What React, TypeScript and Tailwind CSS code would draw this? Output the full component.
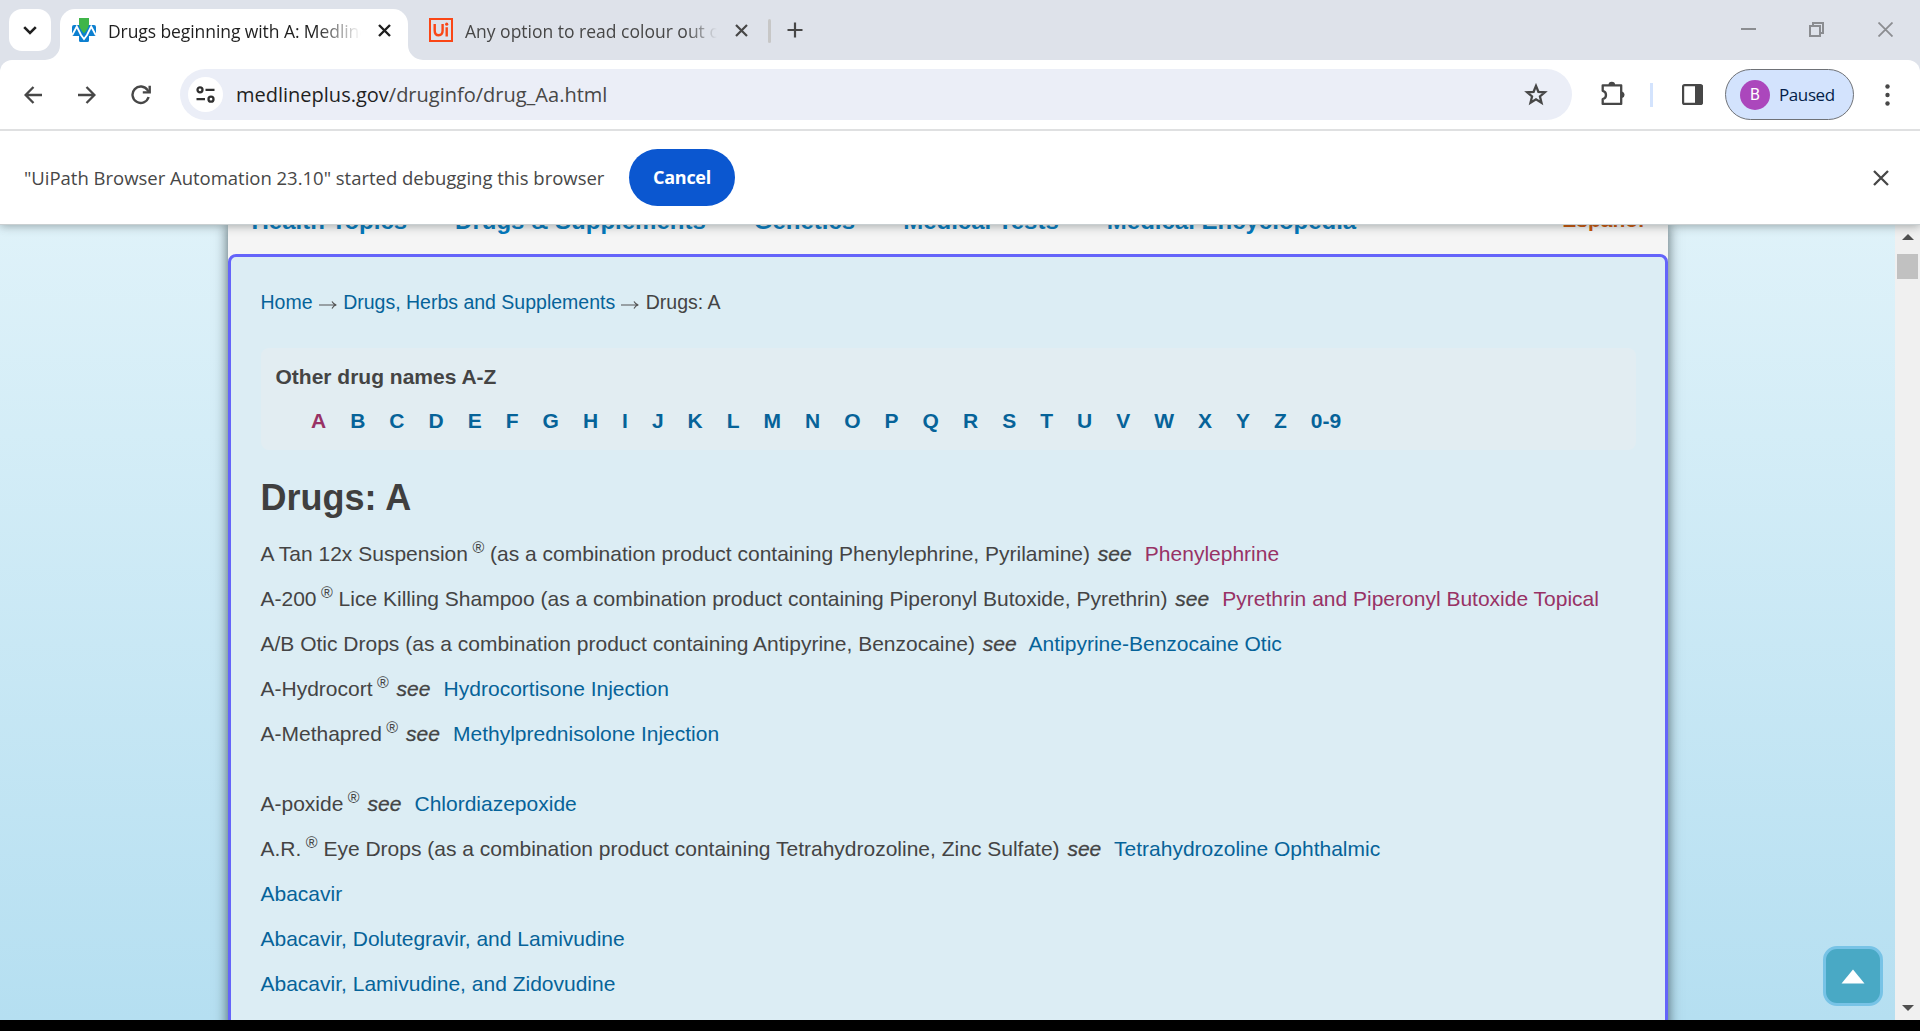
import React from "react";

const SANS = "font-['Liberation_Sans',Arial,sans-serif]";
const UI = "font-['Open_Sans','Noto_Sans',sans-serif]";

function Cross({ size, width, color }: { size: number; width: number; color: string }) {
  return (
    <svg width={size} height={size} viewBox={`0 0 ${size} ${size}`} fill="none" stroke={color} strokeWidth={width}>
      <path d={`M1 1 L${size - 1} ${size - 1} M${size - 1} 1 L1 ${size - 1}`} />
    </svg>
  );
}

function TabStrip() {
  return (
    <div className="flex h-[60px] shrink-0 items-start bg-[#dee2ea]">
      <button className="ml-[9px] mt-[9px] flex size-[42px] items-center justify-center rounded-[13px] bg-white">
        <svg width="14" height="9" viewBox="0 0 14 9" fill="none" stroke="#1f1f1f" strokeWidth="2.6" className="mt-px">
          <path d="M1.2 1.2 L7 7 L12.8 1.2" />
        </svg>
      </button>
      <div className="relative ml-[9px] mt-[9px] flex h-[51px] w-[348px] items-start rounded-t-[15px] bg-white">
        <svg className="absolute -left-[15px] bottom-0" width="15" height="15" viewBox="0 0 15 15">
          <path d="M15 0 A15 15 0 0 1 0 15 H15 Z" fill="#fff" />
        </svg>
        <svg className="absolute -right-[15px] bottom-0" width="15" height="15" viewBox="0 0 15 15">
          <path d="M0 0 A15 15 0 0 0 15 15 H0 Z" fill="#fff" />
        </svg>
        <svg className="ml-[12px] mt-[9px] shrink-0" width="24" height="24" viewBox="0 0 24 24">
          <path d="M0 18 V9 Q0 7 2 7 H22 Q24 7 24 9 V18 H17 V22.5 Q17 24 15.500 24 H8.500 Q7 24 7 22.500 V18 Z" fill="#0b7fd0" />
          <path d="M0 17.500 L4.800 8.500 L9 17 L12 21 L15 17 L19.200 8.500 L24 17.500" fill="none" stroke="#fff" strokeWidth="1.800" />
          <path d="M7 0 H17 V6 Q17 10 12 15.500 Q7 10 7 6 Z" fill="#3fb549" />
        </svg>
        <div className={`${UI} ml-[12px] mt-[9px] h-7 w-[253px] overflow-hidden whitespace-nowrap text-[17.500px] leading-[26px] tracking-[-0.080px] text-[#1f1f1f] [mask-image:linear-gradient(to_right,black_82%,transparent_100%)]`}>
          Drugs beginning with A: MedlinePlus
        </div>
        <div className="ml-[16.5px] mt-[15px]">
          <Cross size={13} width={2.4} color="#1f1f1f" />
        </div>
      </div>
      <svg className="ml-[21px] mt-[18px] shrink-0" width="24" height="24" viewBox="0 0 24 24">
        <rect x="1.000" y="1.000" width="22" height="22" fill="none" stroke="#fa4616" strokeWidth="2" />
        <path d="M5.700 6 V12.500 Q5.700 17.300 9.700 17.300 Q13.600 17.300 13.600 12.500 V6 M17.700 9.200 V18.500" fill="none" stroke="#fa4616" strokeWidth="2.400" />
        <circle cx="17.700" cy="6.200" r="1.600" fill="#fa4616" />
      </svg>
      <div className={`${UI} ml-[12px] mt-[18px] h-7 w-[252px] overflow-hidden whitespace-nowrap text-[17.500px] leading-[26px] text-[#474747] [mask-image:linear-gradient(to_right,black_88%,transparent_100%)]`}>
        Any option to read colour out of
      </div>
      <div className="ml-[18px] mt-[24px]">
        <Cross size={13} width={2.2} color="#474747" />
      </div>
      <div className="ml-[20px] mt-[19px] h-6 w-[3px] rounded bg-[#c7c7c7]" />
      <svg className="ml-[16px] mt-[22px]" width="16" height="16" viewBox="0 0 16 16" stroke="#474747" strokeWidth="2.200">
        <path d="M8 0.500 V15.500 M0.500 8 H15.500" />
      </svg>
      <div className="ml-auto mr-[27px] mt-[22px] flex items-start">
        <svg width="15" height="15" viewBox="0 0 15 15" fill="#8b8d91">
          <rect y="6" width="15" height="2" />
        </svg>
        <svg className="ml-[53px]" width="15" height="15" viewBox="0 0 15 15" fill="none" stroke="#8b8d91" strokeWidth="2">
          <rect x="1" y="4" width="10" height="10" />
          <path d="M4 4 V1 H14 V11 H11" />
        </svg>
        <svg className="ml-[54px]" width="15" height="15" viewBox="0 0 15 15" stroke="#8b8d91" strokeWidth="1.800">
          <path d="M0.500 0.500 L14.500 14.500 M14.500 0.500 L0.500 14.500" />
        </svg>
      </div>
    </div>
  );
}

function Toolbar() {
  return (
    <div className="shrink-0 bg-[#dee2ea]">
      <div className="flex h-[69px] items-center rounded-t-[12px] bg-white">
        <svg className="ml-[24px]" width="18" height="18" viewBox="0 0 18 18" fill="none" stroke="#474747" strokeWidth="2.300">
          <path d="M18 9 H2 M9.500 1 L1.600 9 L9.500 17" />
        </svg>
        <svg className="ml-[36px]" width="18" height="18" viewBox="0 0 18 18" fill="none" stroke="#474747" strokeWidth="2.300">
          <path d="M0 9 H16 M8.500 1 L16.400 9 L8.500 17" />
        </svg>
        <svg className="ml-[35px]" width="20" height="20" viewBox="0 0 20 20" fill="none" stroke="#474747" strokeWidth="2.400">
          <path d="M17.600 12 A8.200 8.200 0 1 1 16.600 5.200 L18.500 7.300" />
          <path d="M18.700 0.800 V7.400 H11.800" />
        </svg>
        <div className="ml-[29px] flex h-[51px] w-[1392px] items-center rounded-full bg-[#ebeef7]">
          <div className="ml-[8px] flex size-[35px] items-center justify-center rounded-full bg-white">
            <svg width="19" height="17" viewBox="0 0 19 17" fill="none" stroke="#303030" strokeWidth="2.300">
              <circle cx="4" cy="3.800" r="2.500" />
              <path d="M9.500 3.800 H18.500 M0.500 13.200 H9" />
              <circle cx="15" cy="13.200" r="2.500" />
            </svg>
          </div>
          <div className={`${UI} ml-[13px] whitespace-nowrap text-[20px] text-[#474747]`}>
            <span className="text-[#1f1f1f]">medlineplus.gov</span>/druginfo/drug_Aa.html
          </div>
          <svg className="ml-auto mr-[24px]" width="24" height="23" viewBox="0 0 24 23" fill="none" stroke="#474747" strokeWidth="2.300">
            <path d="M12 2.900 L14.400 8.800 L20.900 9.300 L15.950 13.450 L17.500 19.700 L12 16.350 L6.500 19.700 L8.050 13.450 L3.100 9.300 L9.600 8.800 Z" />
          </svg>
        </div>
        <svg className="ml-[28px] -mt-[3px]" width="26" height="25" viewBox="0 0 26 25">
          <path d="M2.700 4.300 H21.200 V22.900 H2.700 V18 A4.200 4.200 0 0 0 2.700 9.800 Z" fill="none" stroke="#474747" strokeWidth="2.300" strokeLinejoin="round" />
          <path d="M8.500 4 A3.300 3.300 0 0 1 15.100 4 Z M22 10.400 A3.400 3.400 0 0 1 22 17 Z" fill="#474747" />
        </svg>
        <div className="ml-[24px] h-6 w-[3px] bg-[#d3e3fd]" />
        <svg className="ml-[29px]" width="21" height="21" viewBox="0 0 21 21">
          <rect x="1.100" y="1.100" width="18.800" height="18.800" rx="1.500" fill="none" stroke="#474747" strokeWidth="2.200" />
          <rect x="13" y="1" width="7.500" height="19" fill="#474747" />
        </svg>
        <div className="ml-[22px] flex h-[51px] w-[129px] items-center rounded-full border border-[#6f7277] bg-[#d3e3fd]">
          <div className="ml-[14px] flex size-[30px] items-center justify-center rounded-full bg-[#ab47bc] font-['Roboto',sans-serif] text-[16px] text-white">B</div>
          <span className={`${UI} ml-[9px] text-[17px] tracking-[-0.400px] text-[#041e49]`}>Paused</span>
        </div>
        <svg className="ml-[30.5px]" width="5" height="22" viewBox="0 0 5 22" fill="#474747">
          <circle cx="2.500" cy="2.500" r="2.200" />
          <circle cx="2.500" cy="11" r="2.200" />
          <circle cx="2.500" cy="19.500" r="2.200" />
        </svg>
      </div>
      <div className="h-[2px] bg-[#dfe0e1]" />
    </div>
  );
}

function DebugBar() {
  return (
    <div className="relative z-10 flex h-[93px] shrink-0 items-center bg-white shadow-[0_1px_0_#c9cfd1,0_2px_9px_rgba(60,70,70,0.45)] [clip-path:inset(0_0_-14px_0)]">
      <span className={`${UI} ml-[24px] w-[605px] whitespace-nowrap text-[18.500px] tracking-[-0.015px] text-[#474747]`}>
        "UiPath Browser Automation 23.10" started debugging this browser
      </span>
      <button className={`${UI} h-[57px] w-[106px] rounded-full bg-[#0b57d0] text-[18px] font-bold tracking-[-0.300px] text-white`}>Cancel</button>
      <div className="ml-auto mr-[31px]">
        <Cross size={16} width={2.3} color="#474747" />
      </div>
    </div>
  );
}

const NAV = ["Health Topics", "Drugs & Supplements", "Genetics", "Medical Tests", "Medical Encyclopedia"];
const LETTERS = [..."ABCDEFGHIJKLMNOPQRSTUVWXYZ", "0-9"];

type Drug = { name?: string; mark?: boolean; rest?: string; link: string; visited?: boolean };

const GROUPS: Drug[][] = [
  [
    { name: "A Tan 12x Suspension", mark: true, rest: "(as a combination product containing Phenylephrine, Pyrilamine)", link: "Phenylephrine", visited: true },
    { name: "A-200", mark: true, rest: "Lice Killing Shampoo (as a combination product containing Piperonyl Butoxide, Pyrethrin)", link: "Pyrethrin and Piperonyl Butoxide Topical", visited: true },
    { name: "A/B Otic Drops (as a combination product containing Antipyrine, Benzocaine)", link: "Antipyrine-Benzocaine Otic" },
    { name: "A-Hydrocort", mark: true, link: "Hydrocortisone Injection" },
    { name: "A-Methapred", mark: true, link: "Methylprednisolone Injection" },
  ],
  [
    { name: "A-poxide", mark: true, link: "Chlordiazepoxide" },
    { name: "A.R.", mark: true, rest: "Eye Drops (as a combination product containing Tetrahydrozoline, Zinc Sulfate)", link: "Tetrahydrozoline Ophthalmic" },
    { link: "Abacavir" },
    { link: "Abacavir, Dolutegravir, and Lamivudine" },
    { link: "Abacavir, Lamivudine, and Zidovudine" },
  ],
];

function DrugRow({ drug }: { drug: Drug }) {
  return (
    <li className="h-[45px] whitespace-nowrap leading-[45px]">
      {drug.name && (
        <>
          {drug.name}
          {drug.mark && <span className="relative -top-[8px] text-[16px] leading-none"> ®</span>}
          {drug.rest && ` ${drug.rest}`} <em className="ml-[2px] mr-[7.3px] [-webkit-text-stroke:0.300px_#444]">see</em>{" "}
        </>
      )}
      <a className={drug.visited ? "text-[#983265]" : "text-[#066399]"}>{drug.link}</a>
    </li>
  );
}

function CrumbArrow() {
  return (
    <svg className="mx-[6.3px] inline-block align-[-1px]" width="18" height="10" viewBox="0 0 18 10" fill="none" stroke="#555" strokeWidth="1.200">
      <path d="M0 5 H17 M13 1.500 Q14.500 4.300 17.300 5 Q14.500 5.700 13 8.500" />
    </svg>
  );
}

function Page() {
  return (
    <div className={`${SANS} flex h-[796px] shrink-0 overflow-hidden bg-gradient-to-b from-[#dff2f9] to-[#b5dff1]`}>
      <div className="flex min-w-0 flex-1">
        <div className="relative ml-[228px] flex h-[840px] w-[1440px] flex-col bg-[#f5f5f5] shadow-[0_0_12px_rgba(20,35,40,0.7)]">
          <nav className="flex h-[30px] shrink-0 items-start pl-[23.5px] text-[24px] font-bold leading-[28px] text-[#0078bd]">
            <div className="-mt-[17px] flex gap-[48px] whitespace-nowrap">
              {NAV.map((item) => (
                <a key={item}>{item}</a>
              ))}
            </div>
            <a className="-mt-[18px] ml-auto mr-[24px] text-[21px] text-[#c95000]">Español</a>
          </nav>
          <main className="flex flex-1 flex-col rounded-t-[8px] border-[3px] border-[#6464fa] bg-[#dcedf4] px-[29.5px] text-[21px] text-[#444]">
            <div className="mt-[31px] h-[28px] whitespace-nowrap text-[19.500px] leading-[28px]">
              <a className="text-[#066399]">Home</a>
              <CrumbArrow />
              <a className="text-[#066399]">Drugs, Herbs and Supplements</a>
              <CrumbArrow />
              Drugs: A
            </div>
            <section className="mt-[32px] h-[102px] w-[1375px] rounded-[8px] bg-[#e2edf2] pl-[15px] pt-[15px] font-bold">
              <h2 className="leading-[28px]">Other drug names A-Z</h2>
              <div className="mt-[16px] flex gap-[24px] pl-[35.5px] leading-[28px] text-[#066399]">
                {LETTERS.map((letter) => (
                  <a key={letter} className={letter === "A" ? "text-[#983265]" : ""}>{letter}</a>
                ))}
              </div>
            </section>
            <h1 className="mt-[26px] text-[36px] font-bold leading-[44px] text-[#3f3f3f]">Drugs: A</h1>
            <div className="mt-[11px] flex flex-col gap-[25px]">
              {GROUPS.map((group, i) => (
                <ul key={i}>
                  {group.map((drug) => (
                    <DrugRow key={drug.link} drug={drug} />
                  ))}
                </ul>
              ))}
            </div>
          </main>
        </div>
        <button className="ml-auto mr-[12px] mt-[722px] flex size-[60px] items-center justify-center rounded-[14px] border-[3px] border-[#77c3e6] bg-[#49a9c5]">
          <svg width="24" height="15" viewBox="0 0 24 15" fill="#fff">
            <path d="M12 0.500 L23.500 14.500 H0.500 Z" />
          </svg>
        </button>
      </div>
      <div className="flex w-[25px] flex-col items-center bg-[#f0f0f0]">
        <svg className="mt-[10px]" width="12" height="6" viewBox="0 0 12 6" fill="#505050">
          <path d="M6 0 L12 6 H0 Z" />
        </svg>
        <div className="mt-[14px] h-[25px] w-[21px] bg-[#c1c1c1]" />
        <svg className="mb-[9px] mt-auto" width="12" height="6" viewBox="0 0 12 6" fill="#505050">
          <path d="M0 0 H12 L6 6 Z" />
        </svg>
      </div>
    </div>
  );
}

export default function App() {
  return (
    <div className="flex h-[1031px] w-[1920px] flex-col overflow-hidden bg-black">
      <TabStrip />
      <Toolbar />
      <DebugBar />
      <Page />
    </div>
  );
}
